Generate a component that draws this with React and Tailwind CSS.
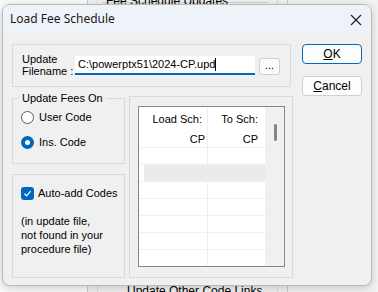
import React from "react";

const body = { fontFamily: '"Liberation Sans", Arial, sans-serif' };

function Radio({ checked, label }) {
  return (
    <div className="flex items-center gap-[5px] h-[13px]">
      {checked ? (
        <span className="w-[13px] h-[13px] rounded-full bg-[#0067c0] flex items-center justify-center">
          <span className="w-[5px] h-[5px] rounded-full bg-white" />
        </span>
      ) : (
        <span className="w-[13px] h-[13px] rounded-full border border-[#5a5a5a] bg-white" />
      )}
      <span>{label}</span>
    </div>
  );
}

function GridRow({ a = "", b = "", shaded = false }) {
  if (shaded) {
    return (
      <div className="flex h-[17px] border-b border-[#f0f0f0] shrink-0">
        <div className="w-[5px] bg-white" />
        <div className="flex-1 bg-[#ebebeb]" />
      </div>
    );
  }
  return (
    <div className="flex h-[17px] border-b border-[#f0f0f0] shrink-0 leading-[17px]">
      <div className="w-[69px] border-r border-[#f0f0f0] text-right pr-[2px]">{a}</div>
      <div className="w-[56px] text-right pr-[6px]">{b}</div>
    </div>
  );
}

export default function App() {
  return (
    <div className="relative w-[378px] h-[292px] overflow-hidden bg-[#f7f7f7] text-[11px] text-black" style={body}>
      {/* window behind the dialog */}
      <div className="flex h-full">
        <div className="w-[87px] bg-[#f9f9f9]" />
        <div className="w-[201px] bg-[#f0f0f0] border-x border-[#c9c9c9] flex">
          <div className="w-[10px] border-r border-[#dadada]" />
          <div className="flex-1 flex flex-col justify-between">
            <div className="-mt-[5px] ml-[4px] mr-[10px] border-b border-[#cfcfcf] h-[8px] flex">
              <span className="bg-[#f0f0f0] px-[4px] text-[12px] leading-[12px]">Fee Schedule Updates</span>
            </div>
            <div className="pl-[29px] text-[12px] leading-[12px] -mb-[5px]">Update Other Code Links</div>
          </div>
          <div className="w-[10px] border-l border-[#dadada]" />
        </div>
        <div className="flex-1 bg-[#f2f2f2]" />
      </div>

      {/* dialog */}
      <div className="absolute left-[2px] top-[4px] w-[370px] h-[282px] rounded-[8px] border border-[#b9b9b9] bg-[#f0f0f0] overflow-hidden shadow-[0_2px_8px_rgba(0,0,0,0.18)] flex flex-col">
        <div className="h-[28px] bg-[#eef3f9] flex items-center justify-between pl-[7px] pr-[9px] shrink-0">
          <span className="text-[12px] text-[#1a1a1a]" style={{ fontFamily: '"Noto Sans", "Open Sans", sans-serif' }}>
            Load Fee Schedule
          </span>
          <svg width="12" height="12" viewBox="0 0 12 12" className="mt-[1px]">
            <path d="M1 1L11 11M11 1L1 11" stroke="#1a1a1a" strokeWidth="1.1" fill="none" />
          </svg>
        </div>

        <div className="flex pl-[9px] pt-[11px]">
          <div className="w-[281px] flex flex-col">
            {/* filename group */}
            <div className="h-[43px] w-[279px] border border-[#dadada] flex items-center pl-[9px]">
              <div className="w-[53px] shrink-0 whitespace-nowrap leading-[12px] mt-[-2px]">
                <div>Update</div>
                <div>Filename :</div>
              </div>
              <div className="w-[180px] shrink-0 h-[19px] bg-white border-b-2 border-[#0067c0] flex items-center pl-[3px] mt-[-1px]">
                C:\powerptx51\2024-CP.upd<span className="w-px h-[13px] bg-black" />
              </div>
              <div className="ml-[4px] w-[21px] shrink-0 h-[17px] mt-[2px] rounded-[3px] border border-[#cfcfcf] bg-[#fbfbfb] flex items-center justify-center leading-none pb-[3px]">
                ...
              </div>
            </div>

            <div className="flex mt-[9px] gap-[4px]">
              <div className="w-[113px] flex flex-col">
                {/* update fees on */}
                <div className="relative h-[66px] border border-[#dadada] mt-[2px]">
                  <span className="absolute -top-[8px] left-[6px] bg-[#f0f0f0] px-[3px] leading-[14px]">Update Fees On</span>
                  <div className="flex flex-col gap-[12px] pl-[8px] pt-[12px]">
                    <Radio label="User Code" />
                    <Radio checked label="Ins. Code" />
                  </div>
                </div>
                {/* auto add */}
                <div className="mt-[10px] h-[104px] border border-[#dadada] pl-[8px] pt-[10px]">
                  <div className="flex items-center gap-[4px] whitespace-nowrap">
                    <span className="w-[13px] h-[13px] shrink-0 rounded-[3px] bg-[#0067c0] flex items-center justify-center">
                      <svg width="9" height="9" viewBox="0 0 9 9">
                        <path d="M1.5 4.8L3.6 6.8L7.6 2.2" stroke="white" strokeWidth="1.2" fill="none" />
                      </svg>
                    </span>
                    <span>Auto-add Codes</span>
                  </div>
                  <div className="mt-[12px] leading-[14px]">
                    <div>(in update file,</div>
                    <div>not found in your</div>
                    <div>procedure file)</div>
                  </div>
                </div>
              </div>

              {/* grid group */}
              <div className="w-[164px] h-[182px] border border-[#dadada] pl-[8px] pt-[9px]">
                <div className="w-[147px] h-[161px] border border-[#828790] bg-white flex overflow-hidden">
                  <div className="w-[126px] flex flex-col">
                    <div className="flex h-[24px] shrink-0 items-center">
                      <div className="w-[69px] border-r border-[#ececec] h-[22px] text-right pr-[5px] leading-[22px]">Load Sch:</div>
                      <div className="w-[56px] text-right pr-[6px] leading-[22px]">To Sch:</div>
                    </div>
                    <GridRow a="CP" b="CP" />
                    <GridRow />
                    <GridRow shaded />
                    <GridRow />
                    <GridRow />
                    <GridRow />
                    <GridRow />
                    <GridRow />
                  </div>
                  <div className="flex-1 bg-[#f0f0f0] flex justify-center pt-[17px]">
                    <div className="w-[3px] h-[17px] rounded-full bg-[#858585] ml-[1px]" />
                  </div>
                </div>
              </div>
            </div>
          </div>

          <div className="ml-[9px] flex flex-col gap-[12px] text-[12px]">
            <div className="w-[60px] h-[20px] rounded-[4px] border border-[#0067c0] bg-[#fdfdfd] flex items-center justify-center">
              <span><u>O</u>K</span>
            </div>
            <div className="w-[60px] h-[20px] rounded-[4px] border border-[#d0d0d0] bg-[#fdfdfd] flex items-center justify-center">
              <span><u>C</u>ancel</span>
            </div>
          </div>
        </div>
      </div>
    </div>
  );
}
